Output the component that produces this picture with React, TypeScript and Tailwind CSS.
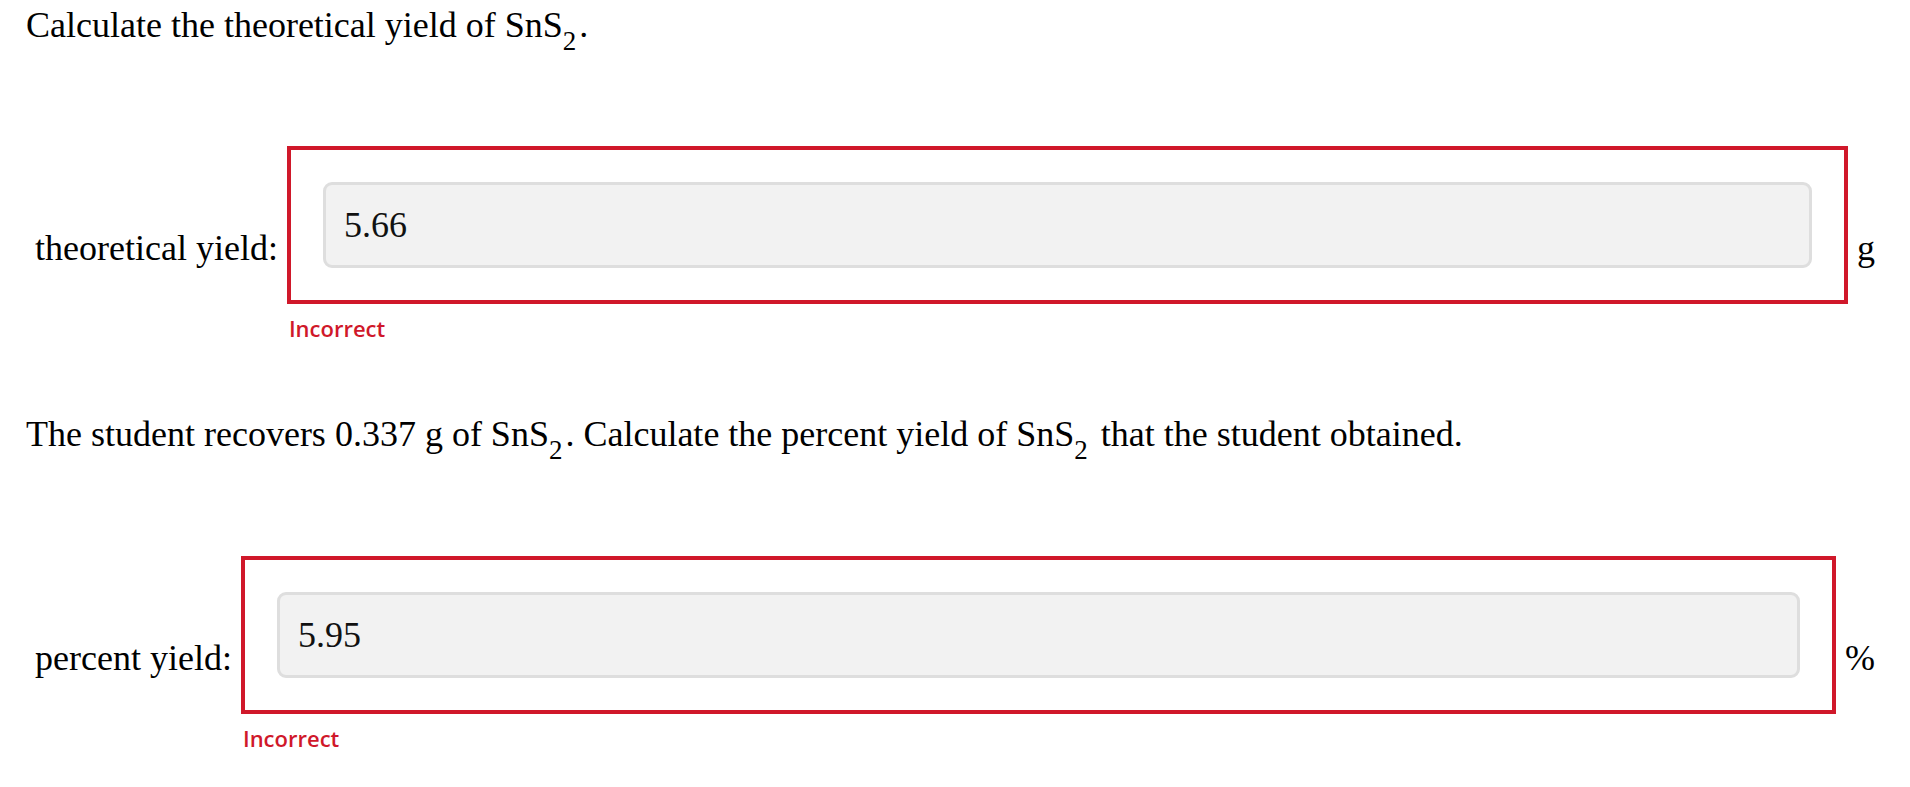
type RowProps = {
  label: string;
  value: string;
  unit: string;
  className?: string;
};

function Sub2() {
  return <sub className="bottom-[-13px] mr-[3px] text-[27px]">2</sub>;
}

function AnswerRow({ label, value, unit, className = '' }: RowProps) {
  return (
    <div className={`flex items-center ${className}`}>
      {/* Label */}
      <div className="px-[9px] whitespace-nowrap">{label}</div>

      {/* Answer box + feedback */}
      <div className="flex-1">
        <div className="border-4 border-[#d0182a] p-8">
          <input
            type="text"
            readOnly
            value={value}
            className="block h-[86px] w-full rounded-[9px] border-[3px] border-[#dedede] bg-[#f2f2f2] px-[18px] text-[36px] text-[#111] outline-none"
          />
        </div>
        <div className="mt-[9px] pb-[7px] pl-[2px] font-['Open_Sans',sans-serif] text-[22px] leading-[30px] font-semibold text-[#d0182a]">
          Incorrect
        </div>
      </div>

      {/* Unit */}
      <div className="px-[9px] whitespace-nowrap">{unit}</div>
    </div>
  );
}

export default function App() {
  return (
    <div className="min-h-screen bg-white px-[26px] pt-[5px] font-['Liberation_Serif',serif] text-[36px] leading-[41px] text-black">
      <p>
        Calculate the theoretical yield of SnS
        <Sub2 />.
      </p>

      <AnswerRow label="theoretical yield:" value="5.66" unit="g" className="mt-[100px]" />

      <p className="mt-[64px]">
        The student recovers 0.337 g of SnS
        <Sub2 />. Calculate the percent yield of SnS
        <Sub2 />
        <span className="ml-[10px]">that the student obtained.</span>
      </p>

      <AnswerRow label="percent yield:" value="5.95" unit="%" className="mt-[101px]" />
    </div>
  );
}
